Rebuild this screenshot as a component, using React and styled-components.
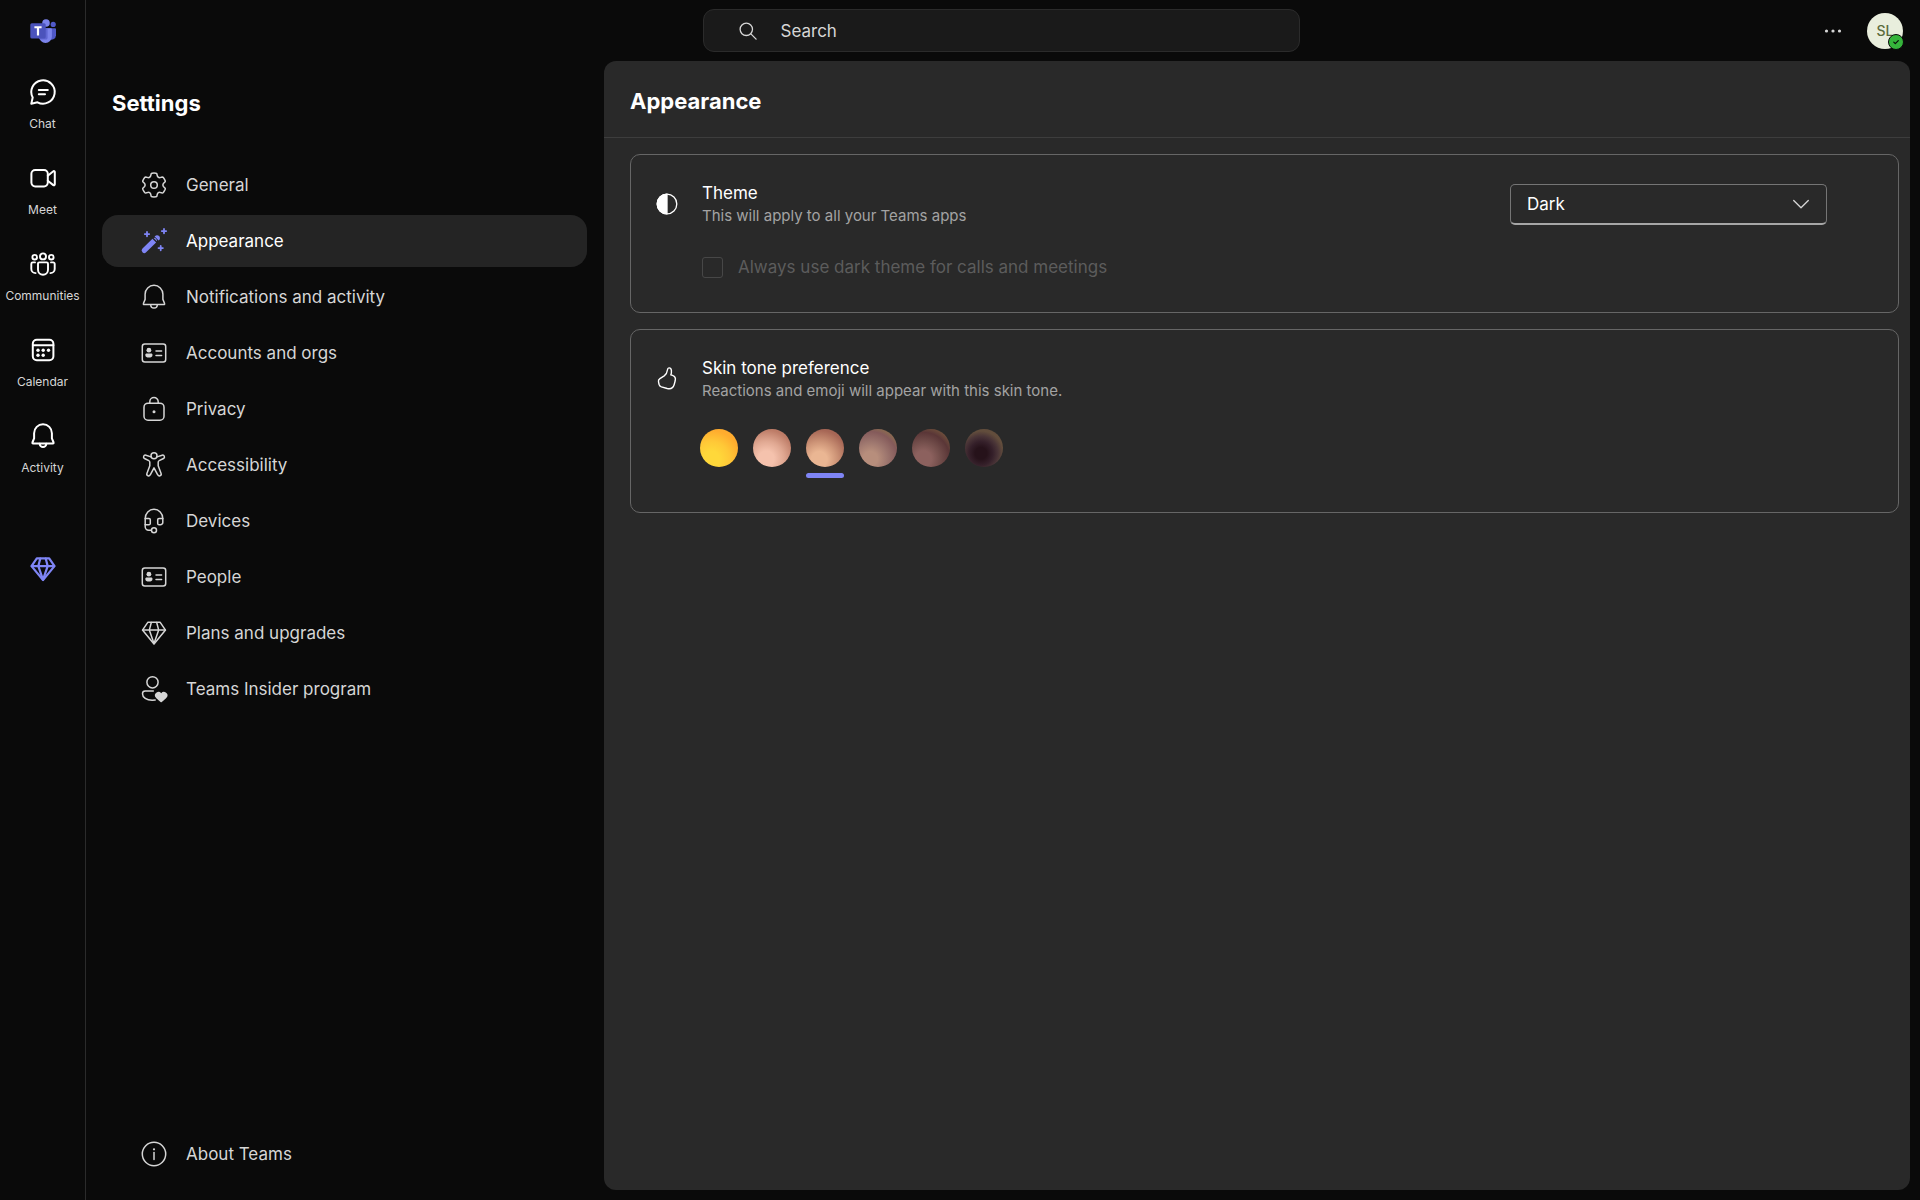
import React, { useState } from "react";
import styled, { createGlobalStyle, css } from "styled-components";

const colors = {
  bg: "#0a0a0a",
  panel: "#292929",
  selected: "#242424",
  line: "#3d3d3d",
  cardLine: "#666666",
  text: "#ffffff",
  soft: "#d6d6d6",
  muted: "#a3a3a3",
  disabled: "#5c5c5c",
  brand: "#7f85f5",
};

const GlobalStyle = createGlobalStyle`
  * { box-sizing: border-box; }
  body {
    margin: 0;
    background: ${colors.bg};
    color: ${colors.text};
    font-family: Inter, "Liberation Sans", sans-serif;
    font-size: 17px;
    line-height: 24px;
  }
  h1, h2, p { margin: 0; }
  button, input, select { font: inherit; color: inherit; }
`;

/* ---------- icons ---------- */

const Svg = styled.svg`
  display: block;
  flex: none;
  width: ${(p) => p.$size || 28}px;
  height: ${(p) => p.$size || 28}px;
  overflow: visible;
  fill: none;
  stroke: currentColor;
  stroke-width: ${(p) => p.$weight || 1.5};
  stroke-linecap: round;
  stroke-linejoin: round;
`;

const Icon = ({ weight, size, children }) => (
  <Svg viewBox="0 0 28 28" $weight={weight} $size={size} aria-hidden="true">
    {children}
  </Svg>
);

const solid = { fill: "currentColor", stroke: "none" };

const TeamsLogo = () => (
  <Svg viewBox="0 0 28 28" aria-hidden="true">
    <g stroke="none">
      <circle cx="24.2" cy="8.4" r="2.6" fill="#5059c9" />
      <path d="M18 12.2h8.1c.5 0 .9.4.9.9v6.2a4.4 4.4 0 0 1-7.4 3.2z" fill="#4f58c8" />
      <circle cx="17" cy="7" r="3.8" fill="#7b83eb" />
      <path d="M11 12.2h11c.5 0 .9.4.9.9v7.4a6.4 6.4 0 0 1-12.8 0v-7.4c0-.5.4-.9.9-.9z" fill="#7b83eb" />
      <path d="M10 12.2h8.6v9.6c0 1.1-.7 1.8-1.8 1.8h-5.9a6.4 6.4 0 0 1-.9-3.1z" fill="#6067d3" />
      <rect x="1.3" y="7.2" width="15.4" height="15.4" rx="1.6" fill="#4b53bc" />
      <path d="M5.4 10.2h7.2v2h-2.500v7.200H7.900v-7.200H5.400z" fill="#fff" />
    </g>
  </Svg>
);

const ChatIcon = () => (
  <Icon weight={2}>
    <path d="M8.5 24.3 2.300 25.700 3.700 19.500A11.700 11.700 0 1 1 8.500 24.300z" />
    <path d="M9.8 12h9M9.8 16.2h6.2" />
  </Icon>
);

const MeetIcon = () => (
  <Icon weight={2}>
    <rect x="2.4" y="6" width="16.4" height="16.4" rx="3.8" />
    <path d="M18.8 11.7 24.300 7.300a.9.9 0 0 1 1.500.7v12.400a.9.9 0 0 1-1.500.7L18.800 16.700" />
  </Icon>
);

const CommunitiesIcon = () => (
  <Icon weight={1.9}>
    <circle cx="5.7" cy="7.2" r="2.3" />
    <circle cx="22.3" cy="7.2" r="2.3" />
    <circle cx="14" cy="6.4" r="3" />
    <path d="M10.3 12.4h7.400a1.300 1.300 0 0 1 1.300 1.300v6a5 5 0 0 1-10 0v-6a1.300 1.300 0 0 1 1.300-1.300z" />
    <path d="M6 12.4H3.800a1.500 1.500 0 0 0-1.500 1.500v5a4.300 4.300 0 0 0 4.300 4.200M22 12.400h2.200a1.500 1.500 0 0 1 1.500 1.500v5a4.300 4.300 0 0 1-4.300 4.200" />
  </Icon>
);

const CalendarIcon = () => (
  <Icon weight={2}>
    <rect x="3.8" y="3.7" width="20.6" height="20.6" rx="4" />
    <path d="M4 9.3h20.4" />
    <g {...solid}>
      <circle cx="9" cy="14.2" r="1.7" />
      <circle cx="14.2" cy="14.2" r="1.7" />
      <circle cx="19.5" cy="14.2" r="1.7" />
      <circle cx="9" cy="19.3" r="1.7" />
      <circle cx="14.2" cy="19.3" r="1.7" />
    </g>
  </Icon>
);

const BellIcon = ({ weight }) => (
  <Icon weight={weight}>
    <path d="M14 2.300a8.900 8.900 0 0 1 8.900 8.900v5.200l1.700 4.100a.7.7 0 0 1-.7 1H4.100a.7.7 0 0 1-.7-1l1.700-4.100v-5.200A8.900 8.900 0 0 1 14 2.300z" />
    <path d="M10.700 21.800a3.300 3.300 0 0 0 6.600 0" />
  </Icon>
);

const GemIcon = ({ weight }) => (
  <Icon weight={weight}>
    <path d="M7.800 3.300h12.400l5.300 7.800L14 25 2.500 11.100z" />
    <path d="M2.800 11.100h22.400M11.300 3.500 9.300 11.100 14 24.600l4.700-13.500-2-7.600" />
  </Icon>
);

const polar = (r, deg) => {
  const a = ((deg - 90) * Math.PI) / 180;
  return `${(14 + r * Math.cos(a)).toFixed(2)} ${(14 + r * Math.sin(a)).toFixed(2)}`;
};
const gearPath =
  [0, 60, 120, 180, 240, 300]
    .map(
      (d, i) =>
        `${i ? "L" : "M"}${polar(11.6, d - 14)}Q${polar(12, d - 12)} ${polar(12, d - 9)}` +
        `A12 12 0 0 1 ${polar(12, d + 9)}Q${polar(12, d + 12)} ${polar(11.6, d + 14)}` +
        `L${polar(9.5, d + 21)}Q${polar(8.3, d + 30)} ${polar(9.5, d + 39)}`
    )
    .join("") + "z";

const GearIcon = () => (
  <Icon>
    <path d={gearPath} />
    <circle cx="14" cy="14" r="3.3" />
  </Icon>
);

const WandIcon = () => (
  <Icon>
    <path d="M4.300 23.400 14.300 13.600" strokeWidth="5.2" />
    <path d="M12.900 11.200 16.900 15.200" stroke={colors.selected} strokeWidth="1.4" />
    <path d="M14.600 9.600a2.900 2.900 0 1 1 4 4z" {...solid} />
    <path d="M7 4.900v4.400M4.800 7.100h4.400M24 1.900v4.400M21.800 4.100h4.400M20.700 18.900v4.400M18.500 21.100h4.400" strokeWidth="1.8" />
  </Icon>
);

const CardIcon = () => (
  <Icon>
    <rect x="2.3" y="5" width="23.4" height="18" rx="2.5" />
    <path d="M16 12h5.600M16 16.600h5.600" />
    <g {...solid}>
      <circle cx="8.9" cy="11.2" r="2.4" />
      <path d="M6.700 14.500h4.400c.9 0 1.400.6 1.400 1.400 0 1.700-1.500 2.700-3.600 2.700s-3.600-1-3.600-2.700c0-.8.5-1.400 1.400-1.400z" />
    </g>
  </Icon>
);

const LockIcon = () => (
  <Icon>
    <rect x="4" y="8.2" width="20" height="17" rx="4" />
    <path d="M9.800 8V6.800a4.200 4.200 0 0 1 8.400 0V8" />
    <circle cx="14" cy="16.7" r="1.5" {...solid} />
  </Icon>
);

const AccessibilityIcon = () => (
  <Icon>
    <circle cx="14" cy="4.8" r="3" />
    <path d="M11 5.900 5.900 4.200a1.800 1.800 0 0 0-1.400 3.300l4.300 2.100c.7.300 1 .9 1 1.600v3.600L6.900 22.400a1.850 1.850 0 0 0 3.500 1.200L14 16.800l3.600 6.800a1.850 1.850 0 0 0 3.500-1.200l-2.900-7.600v-3.600c0-.7.3-1.300 1-1.600l4.300-2.100a1.800 1.800 0 0 0-1.400-3.300L17 5.900" />
  </Icon>
);

const HeadsetIcon = () => (
  <Icon>
    <path d="M5.200 11.500a8.800 9.300 0 0 1 17.600 0" />
    <path d="M5.200 11.500H9a1.300 1.300 0 0 1 1.300 1.300v3.600A1.300 1.300 0 0 1 9 17.700H5.200zM22.800 11.500H19a1.300 1.300 0 0 0-1.300 1.300v3.600a1.300 1.300 0 0 0 1.300 1.300h1.500a2.300 2.300 0 0 0 2.300-2.300z" />
    <path d="M5.200 17.500v2.300a3.400 3.400 0 0 0 3.400 3.400h2.600" />
    <circle cx="14" cy="23.3" r="2.5" />
  </Icon>
);

const PersonHeartIcon = () => (
  <Icon>
    <circle cx="12.5" cy="7.3" r="5.6" />
    <path d="M13.300 16H5.200a2.700 2.700 0 0 0-2.700 2.700c0 3.900 4 6.600 9.700 6.600l3-.2" />
    <path d="M21.200 27.200c-.3 0-5-4-5.900-5.300a3.500 3.500 0 0 1 5.900-3.700 3.500 3.500 0 0 1 5.900 3.700c-.9 1.300-5.600 5.300-5.900 5.300z" {...solid} />
  </Icon>
);

const InfoIcon = () => (
  <Icon>
    <circle cx="14" cy="14" r="11.7" />
    <path d="M14 12.500v7" />
    <circle cx="14" cy="9.3" r="1.1" {...solid} />
  </Icon>
);

const SearchIcon = () => (
  <Icon weight={1.3}>
    <circle cx="12.300" cy="12.300" r="6.200" />
    <path d="m16.900 16.900 5.200 5.200" />
  </Icon>
);

const MoreIcon = () => (
  <Icon>
    <g {...solid}>
      <circle cx="7.5" cy="14" r="1.6" />
      <circle cx="14" cy="14" r="1.6" />
      <circle cx="20.5" cy="14" r="1.6" />
    </g>
  </Icon>
);

const ThemeIcon = () => (
  <Icon weight={1.3}>
    <circle cx="14" cy="14" r="9.8" />
    <path d="M14 4.200a9.800 9.800 0 0 0 0 19.600z" fill="currentColor" />
  </Icon>
);

const ThumbIcon = () => (
  <Icon weight={1.4}>
    <path d="M16 2.900c-1 .1-1.400.8-1.500 1.800-.3 2.600-1.300 4.700-3.300 6.200l-4.300 2.700c-1.200.8-1.700 1.900-1.400 3.200l.6 2.700c.3 1.200 1.100 2 2.300 2.400l5.800 1.600c3.600.9 6-.5 7-4l1-3.700c.6-2.500-.2-4.600-2.700-5.400l-1.700-.5c.6-1.600.8-3 .6-4.600-.2-1.500-1-2.500-2.400-2.400z" />
  </Icon>
);

const ChevronIcon = () => (
  <Icon weight={1.3}>
    <path d="m6.700 10.500 7.300 7.300 7.300-7.300" />
  </Icon>
);

/* ---------- shell ---------- */

const Shell = styled.div`
  display: flex;
  min-height: 100vh;
`;

const Rail = styled.nav`
  display: flex;
  flex-direction: column;
  flex: none;
  align-items: center;
  width: 86px;
  padding-top: 16px;
  border-right: 1px solid #2b2b2b;
`;

const RailList = styled.div`
  display: flex;
  flex-direction: column;
  align-items: center;
  width: 100%;
  padding-top: 25px;
`;

const RailItem = styled.button`
  display: flex;
  flex-direction: column;
  align-items: center;
  gap: 9px;
  width: 100%;
  height: 86px;
  padding: 9px 0 0;
  border: 0;
  background: none;
  color: ${(p) => (p.$brand ? colors.brand : colors.text)};
  cursor: pointer;
`;

const RailLabel = styled.span`
  color: ${colors.soft};
  font-size: 12px;
  line-height: 18px;
`;

const RailGap = styled.div`
  height: 47px;
`;

const Body = styled.div`
  display: flex;
  flex: 1;
  flex-direction: column;
  min-width: 0;
`;

const TopBar = styled.header`
  display: grid;
  grid-template-columns: minmax(0, 1fr) minmax(0, 597px) minmax(0, 1fr);
  align-items: center;
  height: 61px;
  padding: 0 17px 0 13px;
`;

const SearchBox = styled.label`
  display: flex;
  grid-column: 2;
  gap: 19px;
  align-items: center;
  height: 43px;
  padding: 0 30px;
  border: 1px solid #2b2b2b;
  border-radius: 11px;
  background: #1a1a1a;
  color: ${colors.soft};
`;

const SearchInput = styled.input`
  flex: 1;
  min-width: 0;
  padding: 0;
  border: 0;
  outline: 0;
  background: none;
  &::placeholder {
    color: ${colors.soft};
    opacity: 1;
  }
`;

const TopActions = styled.div`
  display: flex;
  gap: 20px;
  align-items: center;
  justify-content: flex-end;
`;

const IconButton = styled.button`
  padding: 0;
  border: 0;
  background: none;
  color: ${colors.soft};
  cursor: pointer;
`;

const Avatar = styled.button`
  position: relative;
  width: 36px;
  height: 36px;
  padding: 0;
  border: 0;
  border-radius: 50%;
  background: #e9eedd;
  color: #5c6b3c;
  font-size: 14px;
  font-weight: 500;
  cursor: pointer;
`;

const Presence = styled.span`
  position: absolute;
  right: -1px;
  bottom: -1px;
  width: 16px;
  height: 16px;
  border: 1px solid ${colors.bg};
  border-radius: 50%;
  background: #35b43b;
  color: ${colors.bg};
`;

const Content = styled.div`
  display: flex;
  flex: 1;
  min-height: 0;
  padding: 0 10px 10px 0;
`;

/* ---------- settings list ---------- */

const Sidebar = styled.aside`
  display: flex;
  flex: none;
  flex-direction: column;
  width: 518px;
  padding: 26px 17px 10px 16px;
`;

const Heading = styled.h1`
  font-size: 22px;
  font-weight: 700;
  line-height: 32px;
`;

const SidebarHeading = styled(Heading).attrs({ as: "h2" })`
  padding-left: 10px;
`;

const NavList = styled.nav`
  display: flex;
  flex: 1;
  flex-direction: column;
  gap: 4px;
  padding-top: 40px;
`;

const NavItem = styled.a`
  display: flex;
  gap: 18px;
  align-items: center;
  height: 52px;
  padding-left: 38px;
  border-radius: 16px;
  color: ${colors.soft};
  text-decoration: none;
  ${(p) =>
    p.$active &&
    css`
      background: ${colors.selected};
      color: ${colors.text};
      svg {
        color: ${colors.brand};
      }
    `}
  &:last-child {
    margin-top: auto;
  }
`;

/* ---------- panel ---------- */

const Panel = styled.main`
  flex: 1;
  min-width: 0;
  border-radius: 12px;
  background: ${colors.panel};
`;

const PanelHeader = styled.header`
  display: flex;
  align-items: center;
  height: 77px;
  padding: 4px 26px 0;
  border-bottom: 1px solid ${colors.line};
`;

const Cards = styled.div`
  display: flex;
  flex-direction: column;
  gap: 16px;
  padding: 16px 11px 16px 26px;
`;

const Card = styled.section`
  padding: 26px 71px 33px 22px;
  border: 1px solid ${colors.cardLine};
  border-radius: 10px;
`;

const CardTop = styled.div`
  display: flex;
  align-items: center;
`;

const CardText = styled.div`
  flex: 1;
  min-width: 0;
  padding-left: 21px;
`;

const CardTitle = styled.h2`
  font-size: 17px;
  font-weight: 400;
  line-height: 24px;
`;

const CardNote = styled.p`
  color: ${colors.muted};
  font-size: 15px;
  line-height: 22px;
`;

const Picker = styled.div`
  display: grid;
  flex: 0 1 317px;
  align-items: center;
  > * {
    grid-area: 1 / 1;
  }
  > svg {
    justify-self: end;
    margin-right: 12px;
    color: ${colors.soft};
    pointer-events: none;
  }
`;

const Select = styled.select`
  width: 100%;
  height: 41px;
  padding: 0 16px;
  border: 1px solid #757575;
  border-bottom: 2px solid #a6a6a6;
  border-radius: 5px;
  background: ${colors.panel};
  appearance: none;
`;

const CheckRow = styled.label`
  display: flex;
  gap: 15px;
  align-items: center;
  padding: 28px 0 0 49px;
  color: ${colors.disabled};
`;

const Checkbox = styled.input`
  width: 21px;
  height: 21px;
  margin: 0;
  border: 1px solid #474747;
  border-radius: 3px;
  appearance: none;
`;

const Tones = styled.div`
  display: flex;
  gap: 15px;
  padding: 27px 0 1px 47px;
`;

const Tone = styled.label`
  display: flex;
  flex-direction: column;
  gap: 6px;
  &::after {
    height: 5px;
    border-radius: 3px;
    background: ${(p) => (p.$active ? colors.brand : "transparent")};
    content: "";
  }
`;

const ToneInput = styled.input`
  width: 38px;
  height: 38px;
  margin: 0;
  border-radius: 50%;
  background: ${(p) => p.$fill};
  appearance: none;
  cursor: pointer;
`;

const railItems = [
  ["Chat", <ChatIcon />],
  ["Meet", <MeetIcon />],
  ["Communities", <CommunitiesIcon />],
  ["Calendar", <CalendarIcon />],
  ["Activity", <BellIcon weight={2} />],
];

const navItems = [
  ["General", <GearIcon />],
  ["Appearance", <WandIcon />],
  ["Notifications and activity", <BellIcon />],
  ["Accounts and orgs", <CardIcon />],
  ["Privacy", <LockIcon />],
  ["Accessibility", <AccessibilityIcon />],
  ["Devices", <HeadsetIcon />],
  ["People", <CardIcon />],
  ["Plans and upgrades", <GemIcon />],
  ["Teams Insider program", <PersonHeartIcon />],
  ["About Teams", <InfoIcon />],
];

const tones = [
  ["Default", "radial-gradient(circle at 30% 80%, #ffd83a 0 20%, #ffc837 45%, #ffac2e 72%)"],
  ["Light", "radial-gradient(circle at 35% 78%, #f5c2ad 0 20%, #e0a892 45%, #bd7c67 75%)"],
  ["Medium-light", "radial-gradient(circle at 35% 80%, #eab693 0 20%, #cd9477 45%, #a66655 75%)"],
  ["Medium", "radial-gradient(circle at 30% 78%, #b78e7c 0 18%, #9d766e 42%, #845a5a 68%, #8a6a50 80%)"],
  ["Medium-dark", "radial-gradient(circle at 30% 78%, #8c615e 0 20%, #734e4b 42%, #5a3637 66%, #6d4d3b 80%)"],
  ["Dark", "radial-gradient(circle at 42% 64%, #26121a 0 18%, #35202a 36%, #493437 52%, #624d3c 68%)"],
];

export default function App() {
  const [tone, setTone] = useState("Medium-light");
  return (
    <Shell>
      <GlobalStyle />
      <Rail aria-label="Apps">
        <TeamsLogo />
        <RailList>
          {railItems.map(([name, icon]) => (
            <RailItem key={name}>
              {icon}
              <RailLabel>{name}</RailLabel>
            </RailItem>
          ))}
          <RailGap />
          <RailItem $brand aria-label="Premium">
            <GemIcon weight={2.2} />
          </RailItem>
        </RailList>
      </Rail>
      <Body>
        <TopBar>
          <SearchBox>
            <SearchIcon />
            <SearchInput type="text" placeholder="Search" aria-label="Search" />
          </SearchBox>
          <TopActions>
            <IconButton aria-label="More options">
              <MoreIcon />
            </IconButton>
            <Avatar>
              SL
              <Presence>
                <Svg viewBox="0 0 14 14" $size={14} $weight={1.2} aria-hidden="true">
                  <path d="m4.800 7.200 1.500 1.500 3-3" />
                </Svg>
              </Presence>
            </Avatar>
          </TopActions>
        </TopBar>
        <Content>
          <Sidebar>
            <SidebarHeading>Settings</SidebarHeading>
            <NavList aria-label="Settings">
              {navItems.map(([name, icon]) => (
                <NavItem key={name} href="#" $active={name === "Appearance"}>
                  {icon}
                  {name}
                </NavItem>
              ))}
            </NavList>
          </Sidebar>
          <Panel>
            <PanelHeader>
              <Heading>Appearance</Heading>
            </PanelHeader>
            <Cards>
              <Card>
                <CardTop>
                  <ThemeIcon />
                  <CardText>
                    <CardTitle id="theme-title">Theme</CardTitle>
                    <CardNote>This will apply to all your Teams apps</CardNote>
                  </CardText>
                  <Picker>
                    <Select aria-labelledby="theme-title" defaultValue="Dark">
                      <option>Dark</option>
                    </Select>
                    <ChevronIcon />
                  </Picker>
                </CardTop>
                <CheckRow>
                  <Checkbox type="checkbox" disabled />
                  Always use dark theme for calls and meetings
                </CheckRow>
              </Card>
              <Card>
                <CardTop>
                  <ThumbIcon />
                  <CardText>
                    <CardTitle>Skin tone preference</CardTitle>
                    <CardNote>Reactions and emoji will appear with this skin tone.</CardNote>
                  </CardText>
                </CardTop>
                <Tones role="radiogroup" aria-label="Skin tone">
                  {tones.map(([name, fill]) => (
                    <Tone key={name} $active={name === tone}>
                      <ToneInput
                        type="radio"
                        name="tone"
                        aria-label={name}
                        $fill={fill}
                        checked={name === tone}
                        onChange={() => setTone(name)}
                      />
                    </Tone>
                  ))}
                </Tones>
              </Card>
            </Cards>
          </Panel>
        </Content>
      </Body>
    </Shell>
  );
}
